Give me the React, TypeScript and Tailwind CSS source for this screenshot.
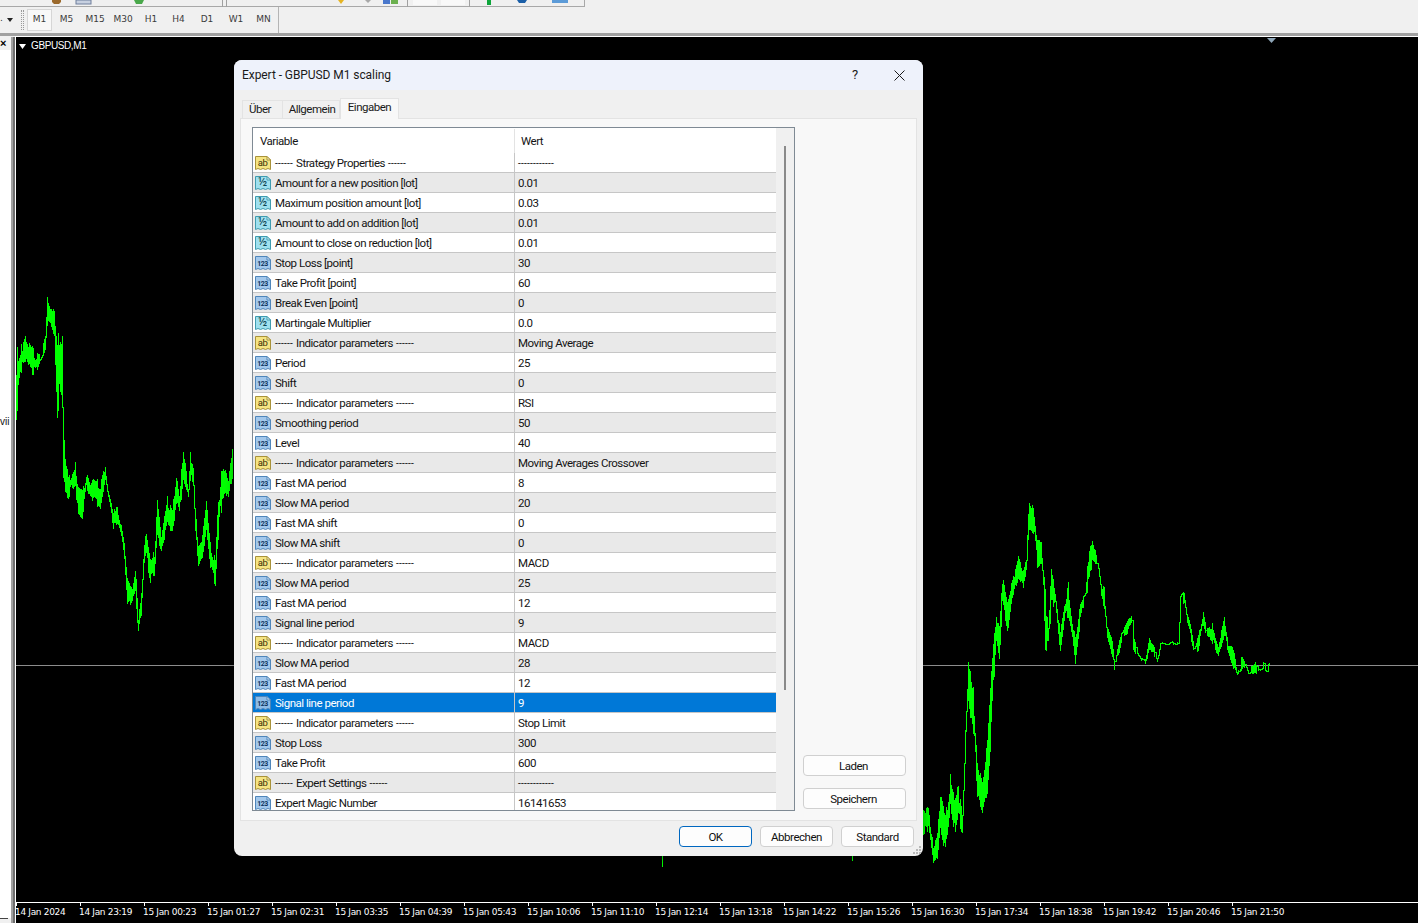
import React from "react";

type Kind = "a" | "h" | "n";
const S = "------ ";
const E = " ------";
const rows: [Kind, string, string][] = [
  ["a", `${S}Strategy Properties${E}`, "------------"],
  ["h", "Amount for a new position [lot]", "0.01"],
  ["h", "Maximum position amount [lot]", "0.03"],
  ["h", "Amount to add on addition [lot]", "0.01"],
  ["h", "Amount to close on reduction [lot]", "0.01"],
  ["n", "Stop Loss [point]", "30"],
  ["n", "Take Profit [point]", "60"],
  ["n", "Break Even [point]", "0"],
  ["h", "Martingale Multiplier", "0.0"],
  ["a", `${S}Indicator parameters${E}`, "Moving Average"],
  ["n", "Period", "25"],
  ["n", "Shift", "0"],
  ["a", `${S}Indicator parameters${E}`, "RSI"],
  ["n", "Smoothing period", "50"],
  ["n", "Level", "40"],
  ["a", `${S}Indicator parameters${E}`, "Moving Averages Crossover"],
  ["n", "Fast MA period", "8"],
  ["n", "Slow MA period", "20"],
  ["n", "Fast MA shift", "0"],
  ["n", "Slow MA shift", "0"],
  ["a", `${S}Indicator parameters${E}`, "MACD"],
  ["n", "Slow MA period", "25"],
  ["n", "Fast MA period", "12"],
  ["n", "Signal line period", "9"],
  ["a", `${S}Indicator parameters${E}`, "MACD"],
  ["n", "Slow MA period", "28"],
  ["n", "Fast MA period", "12"],
  ["n", "Signal line period", "9"],
  ["a", `${S}Indicator parameters${E}`, "Stop Limit"],
  ["n", "Stop Loss", "300"],
  ["n", "Take Profit", "600"],
  ["a", `${S}Expert Settings${E}`, "------------"],
  ["n", "Expert Magic Number", "16141653"],
];

const SELECTED = 27;

const timeframes: [string, string][] = [
  ["M1", "w-[25px]"],
  ["M5", "w-[29px]"],
  ["M15", "w-[28px]"],
  ["M30", "w-[28px]"],
  ["H1", "w-[28px]"],
  ["H4", "w-[27px]"],
  ["D1", "w-[30px]"],
  ["W1", "w-[28px]"],
  ["MN", "w-[27px]"],
];

const timeLabels = [
  "14 Jan 2024", "14 Jan 23:19", "15 Jan 00:23", "15 Jan 01:27", "15 Jan 02:31",
  "15 Jan 03:35", "15 Jan 04:39", "15 Jan 05:43", "15 Jan 10:06", "15 Jan 11:10",
  "15 Jan 12:14", "15 Jan 13:18", "15 Jan 14:22", "15 Jan 15:26", "15 Jan 16:30",
  "15 Jan 17:34", "15 Jan 18:38", "15 Jan 19:42", "15 Jan 20:46", "15 Jan 21:50",
];

// [x, low y, high y] in page pixels
const leftSeries: number[][] = [
  [16,352,420],[18,342,400],[22,345,362],[26,333,360],[30,342,373],[35,352,375],[40,355,360],[45,335,350],
  [47,294,327],[50,305,327],[54,309,343],[57,320,436],[59,345,383],[62,336,407],[63,413,477],[65,453,495],
  [68,477,498],[72,470,488],[75,458,493],[78,487,513],[82,490,518],[86,472,488],[90,483,497],[94,477,502],
  [100,480,510],[105,460,483],[108,490,497],[113,507,528],[117,507,523],[121,525,535],[124,543,563],
  [127,572,610],[132,585,600],[135,560,595],[138,617,635],[141,582,617],[143,557,580],[145,527,557],
  [150,557,582],[154,550,577],[157,497,540],[161,537,550],[167,493,532],[172,510,530],[176,467,510],
  [179,493,517],[183,445,480],[188,488,498],[190,452,480],[193,463,493],[195,510,537],[198,537,565],
  [202,535,557],[206,500,533],[210,537,573],[215,560,585],[217,513,550],[221,458,513],[225,470,492],
  [228,480,500],[233,428,477],
];

// [x, low y, high y] as read off a 3x crop whose origin is (920, 480)
const rightCrop: number[][] = [
  [10,960,1070],[25,985,1050],[40,1090,1160],[50,1060,1135],[60,930,1050],[75,1000,1130],[90,880,1000],[105,920,1105],
  [115,915,1020],[125,1000,1065],[130,925,1000],[135,720,830],[145,540,680],[158,620,760],[170,830,950],
  [185,900,1000],[200,780,940],[212,570,770],[218,490,630],[228,400,500],[238,430,570],[245,270,400],[262,340,475],
  [275,300,350],[295,220,300],[310,270,320],[318,220,290],[328,35,155],[340,70,160],[350,180,260],
  [362,180,250],[368,250,345],[375,310,540],[385,430,490],[393,250,400],[405,340,370],[420,450,525],[435,360,410],
  [443,305,410],[455,420,470],[465,470,550],[480,365,430],[495,335,350],[503,220,330],[517,165,250],
  [530,240,250],[540,310,345],[552,320,385],[560,430,480],[578,485,550],[582,560,570],[595,490,530],
  [607,450,470],[620,420,460],[635,400,420],[640,465,510],[655,520,530],[675,525,560],[688,470,525],
  [698,490,520],[712,530,550],[720,480,490],[740,485,495],[775,480,495],[780,345,370],[792,325,375],
  [800,390,440],[810,430,470],[822,500,520],[835,465,510],[848,395,435],[858,440,465],[875,430,490],
  [893,490,530],[912,410,465],[925,490,520],[938,485,575],[952,575,585],[962,530,570],[970,530,560],
  [985,575,582],[1005,530,580],[1015,570,582],[1030,545,570],[1042,555,578],[1050,547,560],
];
const rightSeries = rightCrop.map(([x, a, b]) => [920 + x / 3, 480 + a / 3, 480 + b / 3]);

function buildPath(series: number[][], seed: number): string {
  let s = seed;
  const rnd = () => {
    s = (s * 16807) % 2147483647;
    return s / 2147483647;
  };
  let d = "";
  let prevA = -1;
  let prevB = -1;
  let hold = 0;
  let fa = 0;
  let fb = 1;
  for (let i = 0; i < series.length - 1; i++) {
    const [x0, l0, h0] = series[i];
    const [x1, l1, h1] = series[i + 1];
    const from = Math.round(x0);
    const to = Math.round(x1);
    for (let x = from; x < to; x++) {
      const t = (x - from) / Math.max(1, to - from);
      const lo = l0 + (l1 - l0) * t;
      const hi = h0 + (h1 - h0) * t;
      const r = hi - lo;
      if (hold <= 0) {
        hold = 1 + Math.floor(rnd() * 3);
        if (r < 9) {
          fa = rnd();
          fb = fa + 0.02;
        } else if (rnd() < 0.2) {
          fa = 0;
          fb = 1;
        } else {
          fa = rnd() * 0.35;
          fb = 1 - rnd() * 0.35;
        }
      }
      hold--;
      let a = Math.round(lo + fa * r);
      let b = Math.round(lo + fb * r);
      if (prevA >= 0) {
        if (a > prevB) a = prevB;
        if (b < prevA) b = prevA;
      }
      d += `M${x + 0.5} ${a}V${b + 1}`;
      prevA = a;
      prevB = b;
    }
  }
  return d;
}

const leftPath = buildPath(leftSeries, 12345);
const rightPath = buildPath(rightSeries, 67891);

function DocIcon({ kind, selected }: { kind: Kind; selected: boolean }) {
  const palette = {
    a: { fill: "#f5e482", stroke: "#a8923a", fold: "#fdf8cf", text: "ab", size: 9.5, ink: "#3a3008" },
    h: { fill: "#9fe0ee", stroke: "#3f9cb0", fold: "#dff6fa", text: "½", size: 12, ink: "#0d4553" },
    n: { fill: "#a3c8ec", stroke: "#4f86ba", fold: "#e0eefa", text: "123", size: 7, ink: "#0e3460" },
  }[kind];
  return (
    <svg width="17" height="16" viewBox="0 0 17 16" className="shrink-0 -mr-px">
      <path
        d="M0.5 1.5H12L15.5 5V14.5L13 13.5L10.5 14.5L8 13.5L5.5 14.5L3 13.5L0.5 14.5Z"
        fill={selected ? "#8fbce6" : palette.fill}
        stroke={palette.stroke}
      />
      <path d="M12 1.5V5H15.5Z" fill={palette.fold} stroke={palette.stroke} />
      <text
        x="7.5"
        y="11"
        textAnchor="middle"
        fontSize={palette.size}
        fontWeight={kind === "n" ? 700 : 400}
        fontFamily="Roboto, sans-serif"
        fill={palette.ink}
      >
        {palette.text}
      </text>
    </svg>
  );
}

function Dashes({ text }: { text: string }) {
  return <span className="text-[10px] tracking-[0.24px]">{text}</span>;
}

function RowName({ name }: { name: string }) {
  if (name.startsWith(S)) {
    return (
      <span className="pt-[2px]">
        <Dashes text="------" />
        <span className="ml-[3px] mr-[3px]">{name.slice(S.length, -E.length)}</span>
        <Dashes text="------" />
      </span>
    );
  }
  return <span className="pt-[2px]">{name}</span>;
}

function ToolbarFragments() {
  return (
    <svg width="600" height="7" viewBox="0 0 600 7" className="block">
      <path d="M52 0h9v2l-2 2h-5l-2-2z" fill="#9c6a2c" />
      <rect x="76" y="0" width="15" height="4" fill="#c7d0e0" stroke="#6f7f9c" />
      <path d="M134 0h10l-2 4h-6z" fill="#49a84a" />
      <rect x="222" y="0" width="1" height="7" fill="#a0a0a0" />
      <rect x="226" y="0" width="1" height="7" fill="#a0a0a0" />
      <path d="M338 0h6l-3 4z" fill="#e6b422" />
      <path d="M365 0h6l-3 3z" fill="#a8a8a8" />
      <rect x="383" y="0" width="7" height="4" fill="#4a78cc" />
      <rect x="391" y="0" width="7" height="4" fill="#6bb04e" />
      <rect x="407" y="0" width="1" height="7" fill="#a0a0a0" />
      <rect x="413" y="0" width="24" height="5" fill="#f8f8f8" />
      <rect x="441" y="0" width="24" height="5" fill="#f8f8f8" />
      <rect x="469" y="0" width="1" height="7" fill="#a0a0a0" />
      <rect x="487" y="0" width="4" height="5" fill="#0ea53a" />
      <path d="M517 0h10l-2 3h-6z" fill="#1b5fa8" />
      <rect x="552" y="0" width="16" height="3" fill="#5c9bd8" />
    </svg>
  );
}

function Button({ label, primary }: { label: string; primary?: boolean }) {
  return (
    <div
      className={`w-[73px] h-[21px] flex items-center justify-center pt-[2px] rounded-[4px] bg-[#fdfdfd] text-[11.5px] tracking-[-0.48px] text-[#111111] border ${
        primary ? "border-[#0067c0]" : "border-[#d0d0d0]"
      }`}
    >
      {label}
    </div>
  );
}

function SideButton({ label }: { label: string }) {
  return (
    <div className="w-[103px] h-[21px] flex items-center justify-center pr-[2px] pt-[2px] rounded-[4px] bg-[#fdfdfd] text-[11.5px] tracking-[-0.48px] text-[#111111] border border-[#d0d0d0]">
      {label}
    </div>
  );
}

function Dialog() {
  return (
    <div className="absolute left-[234px] top-[60px] w-[689px] h-[796px] rounded-lg overflow-hidden bg-[#f0f0f0] flex flex-col shadow-[0_2px_10px_rgba(0,0,0,0.35)] font-['Roboto',sans-serif]">
      <div className="h-[30px] shrink-0 bg-[#eef2fb] flex items-center pl-[8px] text-[12px] tracking-[-0.07px] text-[#1a1a1a]">
        <span className="flex-1">Expert - GBPUSD M1 scaling</span>
        <span className="w-[12px] mr-[33px] text-[13px] text-center">?</span>
        <svg width="11" height="11" viewBox="0 0 11 11" className="mr-[18px]">
          <path d="M0.5 0.5L10.5 10.5M10.5 0.5L0.5 10.5" stroke="#1a1a1a" strokeWidth="1" />
        </svg>
      </div>

      <div className="h-[28px] shrink-0 flex items-end pl-[8px] text-[11.5px] leading-[14px] tracking-[-0.48px] text-[#1a1a1a] relative z-10">
        <div className="w-[41px] h-[18px] border border-b-0 border-[#e3e3e3] flex items-center justify-center pr-[5px] pb-[2px]">Über</div>
        <div className="w-[57px] h-[18px] border-r border-t border-[#e3e3e3] flex items-center justify-center pl-[2px] pb-[1px]">Allgemein</div>
        <div className="w-[59px] h-[21px] -mb-[1px] bg-[#f8f8f8] border border-b-0 border-[#e3e3e3] flex items-start pt-[1px] justify-center">Eingaben</div>
      </div>

      <div className="mx-[6px] w-[677px] h-[703px] shrink-0 border border-[#e3e3e3] bg-[#f8f8f8] flex pl-[11px] pt-[8px]">
        <div className="w-[543px] h-[684px] border border-[#7f8a94] bg-white flex text-[11.5px] tracking-[-0.48px] text-[#141414]">
          <div className="w-[523px] overflow-hidden">
            <div className="h-[25px] flex items-center">
              <div className="w-[261px] pl-[7px] pt-[2px]">Variable</div>
              <div className="w-px h-[24px] bg-[#e3e3e3]" />
              <div className="pl-[6px] pt-[2px]">Wert</div>
            </div>
            {rows.map(([kind, name, value], i) => {
              const selected = i === SELECTED;
              const bg = selected ? "bg-[#0078d7] text-white" : i % 2 === 1 ? "bg-[#e9e9e9]" : "bg-white";
              return (
                <div key={i} className={`h-[20px] flex border-b border-[#c6c6c6] ${bg}`}>
                  <div className="w-[261px] flex items-center pl-[2px] gap-[4px] whitespace-nowrap">
                    <DocIcon kind={kind} selected={selected} />
                    <RowName name={name} />
                  </div>
                  <div className="w-px bg-[#c6c6c6]" />
                  <div className="pl-[3px] pt-[2px] flex items-center">
                    {value.startsWith("-") ? <Dashes text={value} /> : value}
                  </div>
                </div>
              );
            })}
          </div>
          <div className="w-[18px] bg-[#f0f0f0] pl-[8px] pt-[18px]">
            <div className="w-[2px] h-[544px] bg-[#8a8a8a]" />
          </div>
        </div>
        <div className="ml-[8px] h-[682px] flex flex-col justify-end gap-[12px]">
          <SideButton label="Laden" />
          <SideButton label="Speichern" />
        </div>
      </div>

      <div className="flex justify-end gap-[8px] pt-[5px] pr-[9px]">
        <Button label="OK" primary />
        <Button label="Abbrechen" />
        <Button label="Standard" />
      </div>
      <svg width="9" height="9" viewBox="0 0 9 9" className="absolute right-[1px] bottom-[1px]">
        <g fill="#b8b8b8">
          <rect x="6" y="0" width="2" height="2" />
          <rect x="3" y="3" width="2" height="2" />
          <rect x="6" y="3" width="2" height="2" />
          <rect x="0" y="6" width="2" height="2" />
          <rect x="3" y="6" width="2" height="2" />
          <rect x="6" y="6" width="2" height="2" />
        </g>
      </svg>
    </div>
  );
}

export default function App() {
  return (
    <div className="relative w-[1418px] h-[923px] overflow-hidden bg-[#f0f0f0] flex flex-col font-['Liberation_Sans',sans-serif]">
      <div className="h-[7px] shrink-0 w-[585px] border-r border-b border-[#a8a8a8]">
        <ToolbarFragments />
      </div>

      <div className="h-[26px] shrink-0 flex items-center text-[9px] text-[#3c3c3c] font-['DejaVu_Sans',sans-serif]">
        <div className="w-[7px] text-[#333333] pb-[2px]">.</div>
        <svg width="6" height="4" viewBox="0 0 6 4" className="shrink-0">
          <path d="M0 0H6L3 4Z" fill="#222222" />
        </svg>
        <div className="ml-[8px] mr-[3px] w-[3px] h-[20px] border-x border-dotted border-[#9a9a9a]" />
        {timeframes.map(([label, w], i) => (
          <div
            key={label}
            className={`${w} h-[22px] shrink-0 flex items-center justify-center ${i === 0 ? "border border-[#d6d6d6] bg-[#f8f8f8]" : ""}`}
          >
            {label}
          </div>
        ))}
        <div className="ml-[1px] w-px h-[26px] bg-[#b4b4b4]" />
      </div>

      <div className="h-[3px] shrink-0 bg-[#a0a0a0]" />
      <div className="h-px shrink-0 ml-[15px] bg-white" />

      <div className="flex-1 flex min-h-0">
        <div className="w-[11px] shrink-0 flex flex-col">
          <div className="h-[13px] bg-[#f0f0f0] text-[11px] font-bold leading-[13px] text-black">×</div>
          <div className="flex-1 bg-white">
            <div className="mt-[366px] text-[10px] leading-[12px] text-[#111111] overflow-hidden whitespace-nowrap">vii</div>
          </div>
          <div className="h-[1px] w-[8px] bg-[#444444]" />
          <div className="h-[4px] bg-[#f0f0f0]" />
        </div>
        <div className="w-[2px] shrink-0 bg-[#a0a0a0]" />
        <div className="w-[2px] shrink-0 bg-[#6e6e6e]" />
        <div className="w-px shrink-0 bg-white" />

        <div className="flex-1 relative bg-black flex flex-col min-w-0">
          <div className="h-[865px] shrink-0">
            <svg width="1402" height="865" viewBox="16 37 1402 865" className="block" shapeRendering="crispEdges">
              <rect x="16" y="665" width="1402" height="1" fill="#8c8c8c" />
              <path d={leftPath} stroke="#00ff00" strokeWidth="1" fill="none" />
              <path d={rightPath} stroke="#00ff00" strokeWidth="1" fill="none" />
              <path d="M662.5 853V867M852.5 853V861" stroke="#00ff00" strokeWidth="1" fill="none" />
            </svg>
          </div>
          <div className="h-px shrink-0 bg-white" />
          <div className="flex text-[9px] text-white leading-[12px] font-['DejaVu_Sans',sans-serif]">
            {timeLabels.map((t) => (
              <div key={t} className="w-[64px] shrink-0 flex flex-col whitespace-nowrap">
                <div className="w-px h-[3px] bg-white" />
                <span className="-ml-px tracking-[-0.33px]">{t}</span>
              </div>
            ))}
          </div>
          <div className="absolute left-[3px] top-[2px] flex items-center gap-[5px] text-[10px] leading-[14px] tracking-[-0.4px] text-white">
            <svg width="7" height="5" viewBox="0 0 7 5">
              <path d="M0 0H7L3.5 5Z" fill="#ffffff" />
            </svg>
            <span>GBPUSD,M1</span>
          </div>
          <svg width="9" height="5" viewBox="0 0 9 5" className="absolute left-[1251px] top-[1px]">
            <path d="M0 0H9L4.5 5Z" fill="#8ea6b8" />
          </svg>
        </div>
      </div>

      <Dialog />
    </div>
  );
}
